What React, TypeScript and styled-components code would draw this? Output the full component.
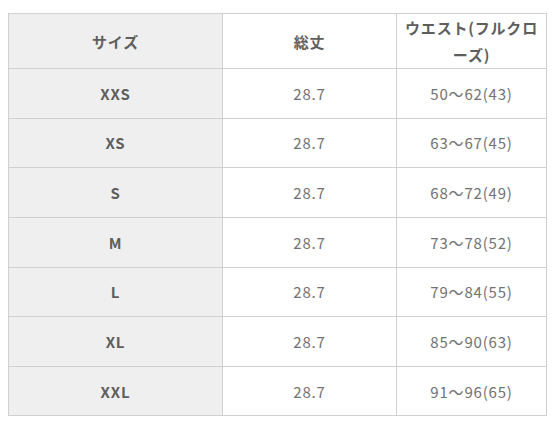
import React from "react";
import styled, { createGlobalStyle } from "styled-components";

const Global = createGlobalStyle`
  html, body { margin: 0; padding: 0; background: #fff; }
  body { padding: 13px 8px 0 8px; font-family: "Noto Sans CJK JP", "Noto Sans", sans-serif; }
`;

const Table = styled.table`
  width: 538px;
  border-collapse: collapse;
  table-layout: fixed;
  border: 1px solid #d0d0d0;
  font-size: 15px;
  line-height: 27px;
  letter-spacing: 0.8px;
`;

const Col = styled.col<{ $w: number }>`
  width: ${(p) => p.$w}px;
`;

const HeadCell = styled.th<{ $gray?: boolean }>`
  height: 54px;
  padding: 0 8px;
  border: 1px solid #d0d0d0;
  background: ${(p) => (p.$gray ? "#efefef" : "#fff")};
  color: #5e5e5e;
  font-weight: 700;
  text-align: center;
  vertical-align: middle;
`;

const Cell = styled.td<{ $gray?: boolean }>`
  height: 48.65px;
  padding: 0 8px;
  border: 1px solid #d0d0d0;
  background: ${(p) => (p.$gray ? "#efefef" : "#fff")};
  color: ${(p) => (p.$gray ? "#5e5e5e" : "#727272")};
  font-weight: ${(p) => (p.$gray ? 700 : 400)};
  text-align: center;
  vertical-align: middle;
`;

const rows = [
  ["XXS", "28.7", "50〜62(43)"],
  ["XS", "28.7", "63〜67(45)"],
  ["S", "28.7", "68〜72(49)"],
  ["M", "28.7", "73〜78(52)"],
  ["L", "28.7", "79〜84(55)"],
  ["XL", "28.7", "85〜90(63)"],
  ["XXL", "28.7", "91〜96(65)"],
];

export default function App() {
  return (
    <>
      <Global />
      <Table>
        <colgroup>
          <Col $w={214} />
          <Col $w={174} />
          <Col $w={150} />
        </colgroup>
        <thead>
          <tr>
            <HeadCell $gray>サイズ</HeadCell>
            <HeadCell>総丈</HeadCell>
            <HeadCell>ウエスト(フルクローズ)</HeadCell>
          </tr>
        </thead>
        <tbody>
          {rows.map((r) => (
            <tr key={r[0]}>
              <Cell $gray>{r[0]}</Cell>
              <Cell>{r[1]}</Cell>
              <Cell>{r[2]}</Cell>
            </tr>
          ))}
        </tbody>
      </Table>
    </>
  );
}
